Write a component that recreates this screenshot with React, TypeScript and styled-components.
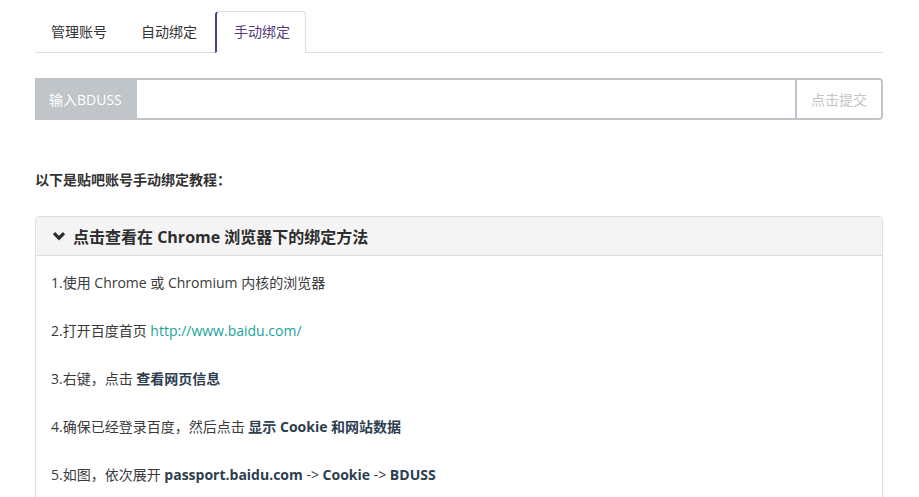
import React from 'react';
import styled, { createGlobalStyle } from 'styled-components';

const Global = createGlobalStyle`
  body {
    margin: 0;
    background: #fff;
    font-family: "Open Sans", "Noto Sans CJK SC", sans-serif;
    font-size: 14px;
    color: #333;
  }
`;

const Page = styled.div`
  padding: 11px 36px 0 35px;
`;

const Tabs = styled.ul`
  display: flex;
  list-style: none;
  margin: 0;
  padding: 0;
  border-bottom: 1px solid #ddd;
`;

const Tab = styled.li<{ $active?: boolean }>`
  margin: 0 2px -1px 0;
  padding: 10px 15px 10px ${(p) => (p.$active ? '17px' : '15px')};
  line-height: 20px;
  border: 1px solid ${(p) => (p.$active ? '#ddd' : 'transparent')};
  border-left: ${(p) => (p.$active ? '2px solid #563d7c' : '1px solid transparent')};
  border-bottom-color: ${(p) => (p.$active ? '#fff' : 'transparent')};
  border-radius: 4px 4px 0 0;
  background: ${(p) => (p.$active ? '#fff' : 'transparent')};
  color: ${(p) => (p.$active ? '#563d7c' : '#333')};
`;

const InputGroup = styled.div`
  display: flex;
  height: 42px;
  margin-top: 25px;
  box-sizing: border-box;
  border: 2px solid #c0c4c8;
  border-radius: 0 4px 4px 0;
`;

const Addon = styled.span`
  display: flex;
  align-items: center;
  padding: 0 15px 0 12px;
  background: #c0c5c9;
  color: #fff;
`;

const Field = styled.input`
  flex: 1;
  border: none;
  outline: none;
  padding: 0 12px;
  font: inherit;
`;

const Submit = styled.button`
  border: none;
  border-left: 2px solid #c0c4c8;
  background: #fff;
  color: #c4c4c4;
  font: inherit;
  padding: 0 14px;
  border-radius: 0 3px 3px 0;
`;

const Intro = styled.p`
  margin: 50px 0 0;
  font-weight: bold;
  line-height: 20px;
  color: #333;
`;

const Panel = styled.div`
  margin-top: 26px;
  border: 1px solid #ddd;
  border-radius: 4px;
`;

const PanelHead = styled.div`
  display: flex;
  align-items: center;
  gap: 7px;
  padding: 0 16px;
  height: 38px;
  background: #f4f4f4;
  border-bottom: 1px solid #ddd;
  border-radius: 3px 3px 0 0;
  font-size: 16px;
  font-weight: bold;
  color: #2d2d2d;
`;

const Chevron = styled.svg`
  width: 14px;
  height: 10px;
  flex: none;
`;

const PanelBody = styled.div`
  padding: 16px 15px 0;
  color: #3a3a3a;
`;

const Step = styled.p`
  margin: 0 0 26px;
  line-height: 22px;
  b {
    color: #2c3e50;
  }
  a {
    color: #1aa39a;
    text-decoration: none;
  }
`;

export default function App() {
  return (
    <Page>
      <Global />
      <Tabs>
        <Tab>管理账号</Tab>
        <Tab>自动绑定</Tab>
        <Tab $active>手动绑定</Tab>
      </Tabs>
      <InputGroup>
        <Addon>输入BDUSS</Addon>
        <Field />
        <Submit>点击提交</Submit>
      </InputGroup>
      <Intro>以下是贴吧账号手动绑定教程：</Intro>
      <Panel>
        <PanelHead>
          <Chevron viewBox="0 0 14 10">
            <path d="M2 2.2 L7 7.2 L12 2.2" fill="none" stroke="#2d2d2d" strokeWidth="3.2" />
          </Chevron>
          点击查看在 Chrome 浏览器下的绑定方法
        </PanelHead>
        <PanelBody>
          <Step>1.使用 Chrome 或 Chromium 内核的浏览器</Step>
          <Step>
            2.打开百度首页 <a href="#">http://www.baidu.com/</a>
          </Step>
          <Step>
            3.右键，点击 <b>查看网页信息</b>
          </Step>
          <Step>
            4.确保已经登录百度，然后点击 <b>显示 Cookie 和网站数据</b>
          </Step>
          <Step>
            5.如图，依次展开 <b>passport.baidu.com</b> -&gt; <b>Cookie</b> -&gt; <b>BDUSS</b>
          </Step>
        </PanelBody>
      </Panel>
    </Page>
  );
}
